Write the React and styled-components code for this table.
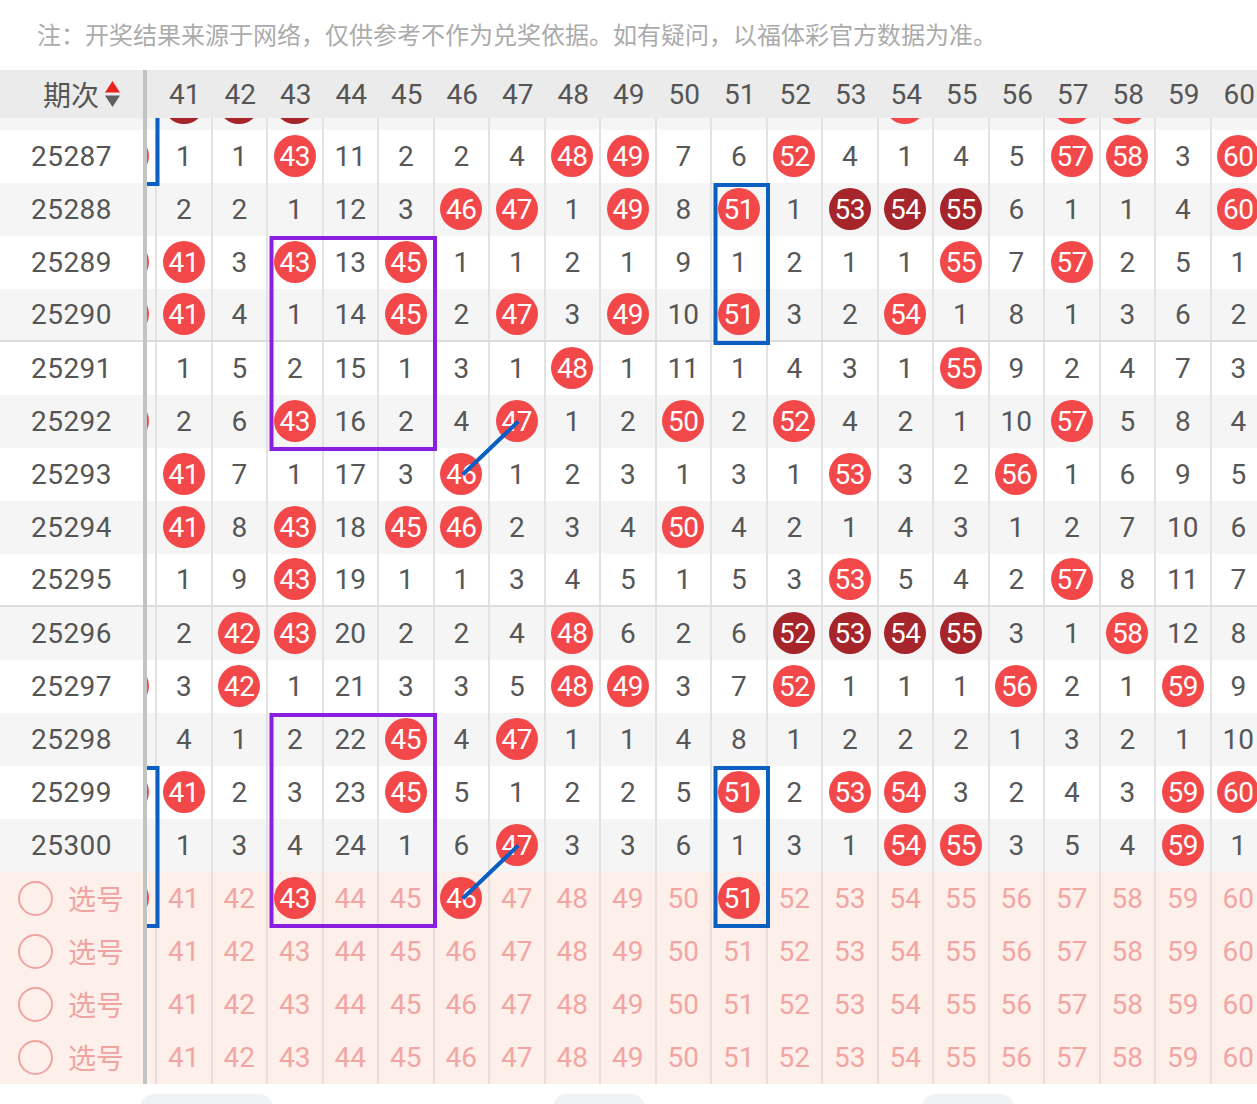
import React from 'react'
import styled, { createGlobalStyle } from 'styled-components'

const COL_W = 55.5
const ROW_H = 53
const FIRST_COL = 40
const COLS = Array.from({ length: 21 }, (_, i) => FIRST_COL + i)
const SCROLL_X = 45.5
const SCROLL_Y = 41.5

const NUM_FONT = 'Roboto, "Noto Sans", sans-serif'
const CJK_FONT = '"Noto Sans CJK SC", "Noto Sans", sans-serif'

const r = 'r'
const d = 'd'

// one entry per column, 40..60 ; r = red ball, d = dark ball
const draws = [
  { id: '25286', v: [2, d, d, d, 10, 1, 1, 3, 2, 3, 6, 5, 1, 3, r, 3, 4, r, r, 2, 1] },
  { id: '25287', v: [r, 1, 1, r, 11, 2, 2, 4, r, r, 7, 6, r, 4, 1, 4, 5, r, r, 3, r] },
  { id: '25288', v: [1, 2, 2, 1, 12, 3, r, r, 1, r, 8, r, 1, d, d, d, 6, 1, 1, 4, r] },
  { id: '25289', v: [r, r, 3, r, 13, r, 1, 1, 2, 1, 9, 1, 2, 1, 1, r, 7, r, 2, 5, 1] },
  { id: '25290', v: [r, r, 4, 1, 14, r, 2, r, 3, r, 10, r, 3, 2, r, 1, 8, 1, 3, 6, 2], sep: true },
  { id: '25291', v: [1, 1, 5, 2, 15, 1, 3, 1, r, 1, 11, 1, 4, 3, 1, r, 9, 2, 4, 7, 3] },
  { id: '25292', v: [r, 2, 6, r, 16, 2, 4, r, 1, 2, r, 2, r, 4, 2, 1, 10, r, 5, 8, 4] },
  { id: '25293', v: [1, r, 7, 1, 17, 3, r, 1, 2, 3, 1, 3, 1, r, 3, 2, r, 1, 6, 9, 5] },
  { id: '25294', v: [2, r, 8, r, 18, r, r, 2, 3, 4, r, 4, 2, 1, 4, 3, 1, 2, 7, 10, 6] },
  { id: '25295', v: [3, 1, 9, r, 19, 1, 1, 3, 4, 5, 1, 5, 3, r, 5, 4, 2, r, 8, 11, 7], sep: true },
  { id: '25296', v: [4, 2, r, r, 20, 2, 2, 4, r, 6, 2, 6, d, d, d, d, 3, 1, r, 12, 8] },
  { id: '25297', v: [r, 3, r, 1, 21, 3, 3, 5, r, r, 3, 7, r, 1, 1, 1, r, 2, 1, r, 9] },
  { id: '25298', v: [1, 4, 1, 2, 22, r, 4, r, 1, 1, 4, 8, 1, 2, 2, 2, 1, 3, 2, 1, 10] },
  { id: '25299', v: [r, r, 2, 3, 23, r, 5, 1, 2, 2, 5, r, 2, r, r, 3, 2, 4, 3, r, r] },
  { id: '25300', v: [1, 1, 3, 4, 24, 1, 6, r, 3, 3, 6, 1, 3, 1, r, r, 3, 5, 4, r, 1] },
]

const picks = [
  [40, 43, 46, 51],
  [],
  [],
  [],
]

// [col, col, row, row, colour] with rows counted from 25286 = 0
const boxes = [
  [43, 45, 3, 6, '#8b1fe0'],
  [43, 45, 12, 15, '#8b1fe0'],
  [51, 51, 2, 4, '#0b5fc1'],
  [51, 51, 13, 15, '#0b5fc1'],
  [40, 40, -2, 1, '#0b5fc1'],
  [40, 40, 13, 15, '#0b5fc1'],
]

const links = [
  [46, 7, 47, 6],
  [46, 15, 47, 14],
]

const GlobalStyle = createGlobalStyle`
  html, body {
    margin: 0;
    padding: 0;
    background: #ffffff;
  }
  body {
    font-family: ${CJK_FONT};
  }
`

const Page = styled.div`
  width: 1257px;
  height: 1104px;
  overflow: hidden;
  background: #fff;
`

const Note = styled.div`
  height: 70px;
  box-sizing: border-box;
  padding: 0 0 4px 37px;
  display: flex;
  align-items: center;
  font-family: ${CJK_FONT};
  font-size: 24px;
  color: #ababab;
  white-space: nowrap;
`

const HeaderRow = styled.div`
  display: flex;
  height: 48px;
  background: #ebebeb;
`

const LabelHead = styled.div`
  width: 143px;
  flex: none;
  display: flex;
  align-items: center;
  justify-content: center;
  gap: 6px;
  padding-left: 20px;
  box-sizing: border-box;
  font-family: ${CJK_FONT};
  font-size: 28px;
  color: #555;
`

const Divider = styled.div`
  width: 4px;
  flex: none;
  background: #c3c3c3;
`

const Viewport = styled.div`
  flex: 1;
  min-width: 0;
  overflow: hidden;
  position: relative;
`

const HeaderTrack = styled.div`
  display: flex;
  height: 100%;
  margin-left: -${SCROLL_X}px;
`

const HeadNum = styled.div`
  width: ${COL_W}px;
  flex: none;
  display: flex;
  align-items: center;
  justify-content: center;
  font-family: ${NUM_FONT};
  font-size: 28px;
  color: #555;
`

const Body = styled.div`
  display: flex;
  height: 965.5px;
  overflow: hidden;
`

const LabelColumn = styled.div`
  width: 143px;
  flex: none;
  margin-top: -${SCROLL_Y}px;
`

const rowBg = ({ $tone }) =>
  $tone === 'pick' ? '#fdefea' : $tone === 'gray' ? '#f5f5f5' : '#ffffff'

const LabelCell = styled.div`
  height: ${ROW_H}px;
  box-sizing: border-box;
  display: flex;
  align-items: center;
  justify-content: ${({ $tone }) => ($tone === 'pick' ? 'flex-start' : 'center')};
  padding-left: ${({ $tone }) => ($tone === 'pick' ? '18px' : '0')};
  gap: 15px;
  background: ${rowBg};
  border-bottom: ${({ $sep }) => ($sep ? '2px solid #dcdcdc' : 'none')};
  font-family: ${NUM_FONT};
  font-size: 28px;
  letter-spacing: 0.5px;
  color: #555;
`

const PickCircle = styled.span`
  width: 35px;
  height: 35px;
  box-sizing: border-box;
  border: 2px solid #f0a4a2;
  border-radius: 50%;
  flex: none;
`

const PickText = styled.span`
  font-family: ${CJK_FONT};
  font-size: 28px;
  color: #f0a4a2;
  letter-spacing: 0;
`

const DataTrack = styled.div`
  position: relative;
  width: ${COL_W * COLS.length}px;
  margin-top: -${SCROLL_Y}px;
  margin-left: -${SCROLL_X}px;
`

const DataRow = styled.div`
  display: flex;
  height: ${ROW_H}px;
  box-sizing: border-box;
  background: ${rowBg};
  border-bottom: ${({ $sep }) => ($sep ? '2px solid #dcdcdc' : 'none')};
`

const Cell = styled.div`
  width: ${COL_W}px;
  flex: none;
  box-sizing: border-box;
  border-right: 2px solid ${({ $pick }) => ($pick ? '#eadcd8' : '#e2e2e2')};
  display: flex;
  align-items: center;
  justify-content: center;
  font-family: ${NUM_FONT};
  font-size: 28px;
  color: ${({ $pick }) => ($pick ? '#f2a6a4' : '#575757')};
`

const Ball = styled.span`
  width: 42px;
  height: 42px;
  border-radius: 50%;
  flex: none;
  display: flex;
  align-items: center;
  justify-content: center;
  background: ${({ $dark }) => ($dark ? '#a6252a' : '#f3484a')};
  color: #fff;
  font-family: ${NUM_FONT};
  font-size: 28px;
  letter-spacing: -0.5px;
`

const Overlay = styled.svg`
  position: absolute;
  left: 0;
  top: 0;
  pointer-events: none;
`

const Footer = styled.div`
  display: flex;
  padding: 10.5px 0 0 140px;
`

const Pill = styled.div`
  width: ${({ $w }) => $w}px;
  height: 40px;
  margin-right: ${({ $gap }) => $gap}px;
  border-radius: 14px;
  background: #f1f2f4;
  flex: none;
`

function SortIcon() {
  return (
    <svg width="15" height="27" viewBox="0 0 15 27">
      <polygon points="7.5,0 15,11.5 0,11.5" fill="#e8221f" />
      <polygon points="0,14.5 15,14.5 7.5,26" fill="#5f5f5f" />
    </svg>
  )
}

function Marks() {
  const w = COL_W * COLS.length
  const h = ROW_H * (draws.length + picks.length)
  const cx = (n) => (n - FIRST_COL + 0.5) * COL_W
  const cy = (i) => (i + 0.5) * ROW_H
  return (
    <Overlay width={w} height={h}>
      {boxes.map(([c1, c2, r1, r2, color], i) => {
        const ox = (c1 - FIRST_COL) * COL_W + 1
        const ow = (c2 - c1 + 1) * COL_W + 1
        const oy = r1 * ROW_H
        const oh = (r2 - r1 + 1) * ROW_H + 3
        return (
          <rect
            key={i}
            x={ox + 2}
            y={oy + 2}
            width={ow - 4}
            height={oh - 4}
            fill="none"
            stroke={color}
            strokeWidth="4"
          />
        )
      })}
      {links.map(([c1, r1, c2, r2], i) => (
        <line
          key={i}
          x1={cx(c1)}
          y1={cy(r1)}
          x2={cx(c2)}
          y2={cy(r2)}
          stroke="#0b5fc1"
          strokeWidth="4"
        />
      ))}
    </Overlay>
  )
}

function renderValue(value, col) {
  if (value === r) return <Ball>{col}</Ball>
  if (value === d) return <Ball $dark>{col}</Ball>
  return value
}

export default function App() {
  return (
    <Page>
      <GlobalStyle />
      <Note>注：开奖结果来源于网络，仅供参考不作为兑奖依据。如有疑问，以福体彩官方数据为准。</Note>

      <HeaderRow>
        <LabelHead>
          期次
          <SortIcon />
        </LabelHead>
        <Divider />
        <Viewport>
          <HeaderTrack>
            {COLS.map((n) => (
              <HeadNum key={n}>{n}</HeadNum>
            ))}
          </HeaderTrack>
        </Viewport>
      </HeaderRow>

      <Body>
        <LabelColumn>
          {draws.map((row, i) => (
            <LabelCell key={row.id} $tone={i % 2 === 0 ? 'gray' : 'white'} $sep={row.sep}>
              {row.id}
            </LabelCell>
          ))}
          {picks.map((_, i) => (
            <LabelCell key={'p' + i} $tone="pick">
              <PickCircle />
              <PickText>选号</PickText>
            </LabelCell>
          ))}
        </LabelColumn>
        <Divider />
        <Viewport>
          <DataTrack>
            {draws.map((row, i) => (
              <DataRow key={row.id} $tone={i % 2 === 0 ? 'gray' : 'white'} $sep={row.sep}>
                {row.v.map((value, j) => (
                  <Cell key={j}>{renderValue(value, COLS[j])}</Cell>
                ))}
              </DataRow>
            ))}
            {picks.map((chosen, i) => (
              <DataRow key={'p' + i} $tone="pick">
                {COLS.map((n) => (
                  <Cell key={n} $pick>
                    {chosen.includes(n) ? <Ball>{n}</Ball> : n}
                  </Cell>
                ))}
              </DataRow>
            ))}
            <Marks />
          </DataTrack>
        </Viewport>
      </Body>

      <Footer>
        <Pill $w={133} $gap={280} />
        <Pill $w={92} $gap={277} />
        <Pill $w={92} $gap={0} />
      </Footer>
    </Page>
  )
}
